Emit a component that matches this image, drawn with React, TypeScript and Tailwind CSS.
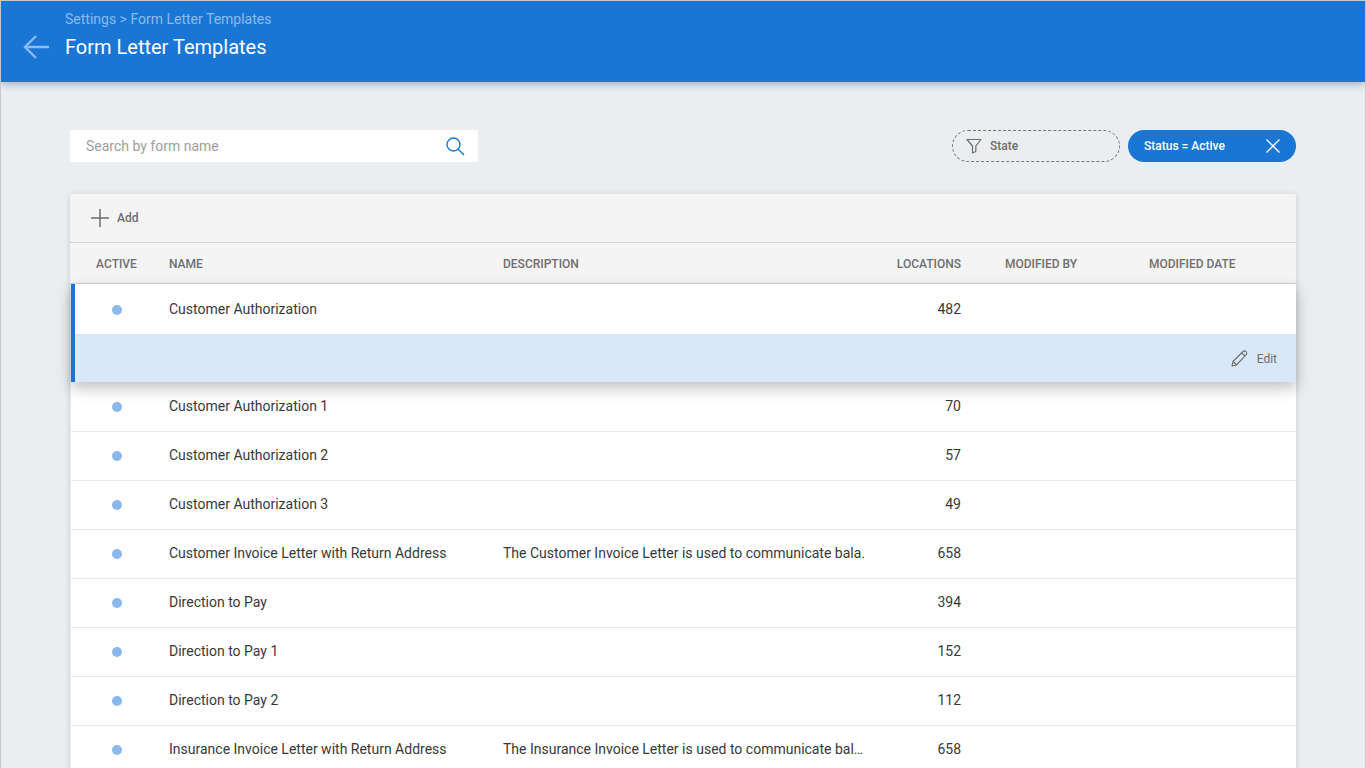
import React from "react";

const rows: [string, string, string][] = [
  ["Customer Authorization 1", "", "70"],
  ["Customer Authorization 2", "", "57"],
  ["Customer Authorization 3", "", "49"],
  ["Customer Invoice Letter with Return Address", "The Customer Invoice Letter is used to communicate bala.", "658"],
  ["Direction to Pay", "", "394"],
  ["Direction to Pay 1", "", "152"],
  ["Direction to Pay 2", "", "112"],
  ["Insurance Invoice Letter with Return Address", "The Insurance Invoice Letter is used to communicate balance due", "658"],
];

function Cols({ name, desc, loc, lift = "mb-[2px]" }: { name: string; desc?: string; loc: string; lift?: string }) {
  return (
    <>
      <div className="w-[99px] shrink-0 pl-[42px]">
        <span className="block w-[10px] h-[10px] rounded-full bg-[#8ab8ec]" />
      </div>
      <div className={`w-[334px] shrink-0 truncate pr-2 ${lift}`}>{name}</div>
      <div className={`w-[363px] shrink-0 truncate ${lift}`}>{desc}</div>
      <div className={`w-[95px] shrink-0 text-right ${lift}`}>{loc}</div>
    </>
  );
}

export default function App() {
  return (
    <div
      className="h-[768px] w-[1366px] overflow-hidden bg-[#ebeef1] border-t border-l border-r border-[#c9c9c9] text-[#383838] text-[14px]"
      style={{ fontFamily: "Roboto, sans-serif" }}
    >
      <header className="h-[81px] bg-[#1976d4] flex items-start shadow-[0_2px_8px_rgba(0,0,0,0.3)] relative z-10">
        <svg className="ml-[21px] mt-[32px] shrink-0" width="28" height="28" viewBox="0 0 28 28" fill="none" stroke="#8cbbee" strokeWidth="2.4">
          <path d="M27 14H3M14 3L3 14L14 25" />
        </svg>
        <div className="ml-[15px]">
          <div className="mt-[10px] text-[14px] leading-[16px] text-[#8cbbee]">Settings &gt; Form Letter Templates</div>
          <div className="mt-[7px] text-[20px] leading-[26px] text-white">Form Letter Templates</div>
        </div>
      </header>

      <div className="pl-[69px] w-[1295px]">
        <div className="mt-[48px] flex items-center justify-between">
          <div className="w-[408px] h-[32px] bg-white flex items-center justify-between pl-[16px] pr-[13px]">
            <span className="text-[#9e9e9e] text-[14px]">Search by form name</span>
            <svg width="20" height="20" viewBox="0 0 20 20" fill="none" stroke="#1976d4" strokeWidth="1.4">
              <circle cx="8.5" cy="8.5" r="6.5" />
              <path d="M13.2 13.2L19 19" />
            </svg>
          </div>
          <div className="flex gap-[8px]">
            <div className="w-[168px] h-[32px] rounded-full border border-dashed border-[#777777] flex items-center pl-[13px] gap-[8px] text-[#6e6e6e] text-[12px] font-medium">
              <svg width="16" height="16" viewBox="0 0 16 16" fill="none" stroke="#6b6b6b" strokeWidth="1.2">
                <path d="M1 1.5H15L9.8 8V13.5L6.5 15V8L1 1.5Z" strokeLinejoin="round" />
              </svg>
              <span>State</span>
            </div>
            <div className="w-[168px] h-[32px] rounded-full bg-[#1976d4] flex items-center justify-between pl-[16px] pr-[16px] text-white text-[12px] font-medium">
              <span>Status = Active</span>
              <svg width="14" height="14" viewBox="0 0 14 14" fill="none" stroke="#ffffff" strokeWidth="1.4">
                <path d="M0.5 0.5L13.5 13.5M13.5 0.5L0.5 13.5" />
              </svg>
            </div>
          </div>
        </div>

        <div className="mt-[32px] bg-white shadow-[0_1px_6px_rgba(0,0,0,0.15)] w-[1226px] border-l border-[#e8e8e8]">
          <div className="h-[48px] -ml-[1px] bg-[#f4f4f4] flex items-center pl-[21px] gap-[8px] text-[#6e6e6e] text-[12px] font-medium">
            <svg width="18" height="18" viewBox="0 0 18 18" fill="none" stroke="#6b6b6b" strokeWidth="1.5">
              <path d="M9 0V18M0 9H18" />
            </svg>
            <span>Add</span>
          </div>
          <div className="h-[42px] -ml-[1px] bg-[#f4f4f4] border-t border-b border-[#d2d2d2] flex items-center text-[12px] font-medium text-[#6e6e6e]">
            <div className="w-[93px] shrink-0 text-center pt-[2px]">ACTIVE</div>
            <div className="w-[334px] shrink-0 pl-[6px] pt-[1px]">NAME</div>
            <div className="w-[362px] shrink-0 pl-[6px] pt-[1px]">DESCRIPTION</div>
            <div className="w-[102px] shrink-0 text-right pt-[1px]">LOCATIONS</div>
            <div className="w-[188px] shrink-0 pl-[44px] pt-[1px]">MODIFIED BY</div>
            <div className="shrink-0 pt-[1px]">MODIFIED DATE</div>
          </div>

          <div className="relative z-[5] bg-white border-l-[4px] border-[#1976d4] shadow-[0_6px_14px_rgba(0,0,0,0.25)]">
            <div className="h-[50px] flex items-center -ml-[5px] pt-[1px]">
              <Cols name="Customer Authorization" loc="482" lift="mb-0" />
            </div>
            <div className="h-[48px] bg-[#d9e8f9] flex items-center justify-end pr-[19px] gap-[9px] text-[12px] text-[#6e6e6e] pt-[1px]">
              <svg width="17" height="17" viewBox="0 0 17 17" fill="none" stroke="#6b6b6b" strokeWidth="1.1" strokeLinejoin="round">
                <path d="M1 16L2 11.5L12 1.5C12.8 0.7 14 0.7 15 1.7C16 2.7 16 3.9 15.2 4.7L5.5 15L1 16Z" />
                <path d="M2 11.5L5.5 15M10.8 3L14 6.2" />
              </svg>
              <span>Edit</span>
            </div>
          </div>

          <div className="pt-[1px]">
            {rows.map((r) => (
              <div key={r[0]} className="h-[49px] flex items-center border-b border-[#e9e9e9] -ml-[1px]">
                <Cols name={r[0]} desc={r[1]} loc={r[2]} />
              </div>
            ))}
          </div>
        </div>
      </div>
    </div>
  );
}
